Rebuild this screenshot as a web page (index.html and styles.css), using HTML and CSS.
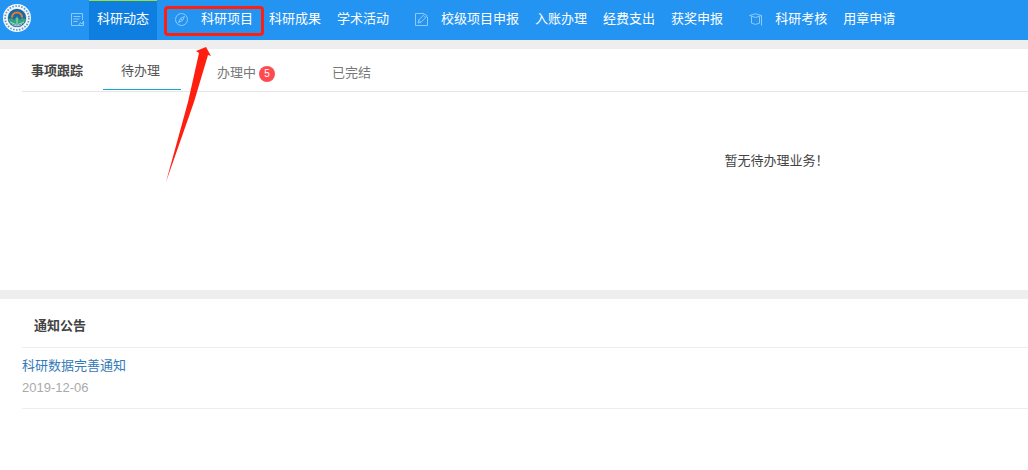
FILE: index.html
```html
<!DOCTYPE html>
<html lang="zh-CN">
<head>
    <meta charset="UTF-8">
    <meta name="viewport" content="width=device-width, initial-scale=1.0">
    <title>科研动态</title>
    <link rel="stylesheet" href="styles.css">
</head>
<body>

    <header class="navbar">
        <svg class="logo" viewBox="0 0 30 30" aria-hidden="true">
            <circle cx="15" cy="15" r="14" fill="#f4f9fc"/>
            <circle cx="15" cy="15" r="11.9" fill="none" stroke="#6d9cc0" stroke-width="1.8" stroke-dasharray="1.6 1.4"/>
            <circle cx="15" cy="15" r="9.6" fill="#1768a6" stroke="#fff" stroke-width="0.6"/>
            <path d="M10 14.5a5 5 0 1 1 10 0" fill="none" stroke="#e77c2b" stroke-width="2.2"/>
            <path d="M6 16l4-1 2 2 3-4 3 4 2-2 4 1-2.5 5H8.5z" fill="#36a47b"/>
            <path d="M8 19l7 3 7-3M10 21.5l5 1.5 5-1.5M15 15v6" fill="none" stroke="#c9e9dc" stroke-width="0.8"/>
        </svg>

        <nav class="menu">
            <div class="group">
                <svg class="icon" viewBox="0 0 13 13" aria-hidden="true">
                    <path d="M11.5 7V.5H.5v12h7M2.5 3.5h7M2.5 6h6M2.5 8.5h4M7.5 12.5l2-3 1.5 1.5 1.5-3v4.5z"/>
                </svg>
                <a class="item active" href="#">科研动态</a>
            </div>
            <div class="group">
                <svg class="icon" viewBox="0 0 13 13" aria-hidden="true">
                    <circle cx="6.5" cy="6.5" r="6"/>
                    <path d="M9.5 3.5L7.5 7.5 3.5 9.5l2-4zM5.5 5.5l2 2"/>
                </svg>
                <a class="item" href="#">科研项目</a>
                <a class="item" href="#">科研成果</a>
                <a class="item" href="#">学术活动</a>
            </div>
            <div class="group">
                <svg class="icon" viewBox="0 0 13 13" aria-hidden="true">
                    <path d="M9 .5H.5v12h12V4M3 10l.7-3L10 .8 12.2 3 6 9.3zM3.7 7L6 9.3M8.5 2.3l2.2 2.2"/>
                </svg>
                <a class="item" href="#">校级项目申报</a>
                <a class="item" href="#">入账办理</a>
                <a class="item" href="#">经费支出</a>
                <a class="item" href="#">获奖申报</a>
            </div>
            <div class="group">
                <svg class="icon" viewBox="0 0 13 13" aria-hidden="true">
                    <path d="M.5 2.5l6-1.7 6 1.7-6 2zM2.5 3.5v6.7q4 2.4 8 0V3.5M12.5 2.5v10"/>
                </svg>
                <a class="item" href="#">科研考核</a>
                <a class="item" href="#">用章申请</a>
            </div>
        </nav>
    </header>

    <main>
        <section class="panel track">
            <div class="tabs">
                <h2 class="title">事项跟踪</h2>
                <button class="tab current" type="button">待办理</button>
                <button class="tab" type="button">办理中<span class="badge">5</span></button>
                <button class="tab" type="button">已完结</button>
            </div>
            <p class="empty">暂无待办理业务！</p>
        </section>

        <section class="panel notice">
            <h2 class="notice-title">通知公告</h2>
            <ul class="notice-list">
                <li>
                    <a href="#">科研数据完善通知</a>
                    <time datetime="2019-12-06">2019-12-06</time>
                </li>
            </ul>
        </section>
    </main>

    <div class="mark-box"></div>
    <svg class="mark-arrow" viewBox="0 0 46 137" aria-hidden="true">
        <path d="M40 1l5 9-3-1-14 47L0 136 22 56 33 7l-3-2z" fill="#ff1f10"/>
    </svg>

</body>
</html>
```

FILE: styles.css
```css
* {
    margin: 0;
    padding: 0;
    box-sizing: border-box;
}
body {
    font-family: "Liberation Sans", "Noto Sans CJK SC", sans-serif;
    font-size: 13px;
    line-height: 20px;
    color: #444;
    background-color: #fff;
}
a {
    text-decoration: none;
}

/* top bar */
.navbar {
    display: flex;
    height: 40px;
    background-color: #2494f2;
}
.logo {
    flex: none;
    width: 30px;
    height: 30px;
    margin: 3px 21px 0 2px;
}
.menu,
.group {
    display: flex;
}
.icon {
    flex: none;
    width: 13px;
    height: 13px;
    margin: 13px 5px 0 18px;
    fill: none;
    stroke: #8fc9fa;
    stroke-width: 1;
}
.item {
    padding: 9px 8px;
    color: #fff;
    white-space: nowrap;
}
.item.active {
    padding-top: 8px;
    border-top: 1px solid #9be22d;
    background-color: #0e7fe1;
}

/* panels */
.panel {
    padding-left: 22px;
    border-top: 9px solid #eee;
}
.track {
    min-height: 250px;
}
.tabs {
    display: flex;
    height: 43px;
    border-bottom: 1px solid #e4e7e7;
}
.title {
    padding: 12px 20px 0 9px;
    font-size: 13px;
}
.tab {
    height: 41px;
    margin-right: 18px;
    padding: 6px 21px 0 18px;
    border: none;
    background: none;
    font: inherit;
    color: #777;
    cursor: pointer;
}
.tab.current {
    padding-top: 4px;
    border-bottom: 1px solid #16a5cc;
    color: #555;
}
.badge {
    display: inline-block;
    width: 16px;
    height: 16px;
    margin-left: 3px;
    border-radius: 8px;
    background-color: #ff4b50;
    color: #fff;
    font-size: 10px;
    line-height: 16px;
    text-align: center;
}
.empty {
    margin-left: 50%;
    padding-top: 59px;
    text-align: center;
}

/* notices */
.notice-title {
    padding: 17px 12px 11px;
    border-bottom: 1px solid #eee;
    font-size: 13px;
}
.notice-list {
    list-style: none;
}
.notice-list li {
    padding: 8px 0 10px;
    border-bottom: 1px solid #eee;
}
.notice-list a {
    color: #337ab7;
}
.notice-list time {
    display: block;
    padding-top: 2px;
    color: #aaa;
}

/* highlight drawn over the menu */
.mark-box {
    position: absolute;
    top: 6px;
    left: 164px;
    width: 100px;
    height: 30px;
    border: 3px solid #ff1f10;
    border-radius: 4px;
}
.mark-arrow {
    position: absolute;
    top: 46px;
    left: 166px;
    width: 46px;
    height: 137px;
}
```
